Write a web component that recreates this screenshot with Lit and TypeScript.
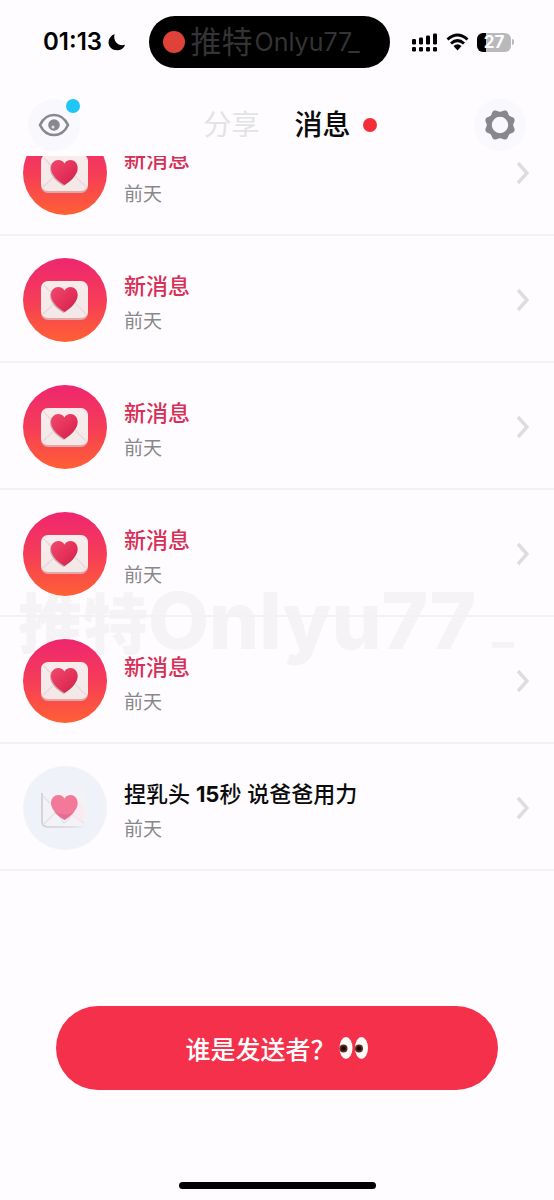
import { LitElement, html, css, svg } from "lit";
import { customElement, property, state } from "lit/decorators.js";
import { classMap } from "lit/directives/class-map.js";

const HEART =
  "M41.500 54C37 51 28 45 28 37C28 32 31.500 29 35.300 29C38.200 29 40.300 30.300 41.500 32.700C42.700 30.300 44.800 29 47.500 29C51.300 29 54.700 32 54.700 37C54.700 45 46 51 41.500 54Z";

/** Soft eight-lobed outline of the settings wheel, centred on 16,16. */
function gearPath(): string {
  const points: string[] = [];
  for (let i = 0; i < 160; i++) {
    const a = (i / 160) * Math.PI * 2;
    const r = 14.4 - 1.2 * Math.cos(a * 8);
    points.push(`${(16 + r * Math.cos(a)).toFixed(2)} ${(16 + r * Math.sin(a)).toFixed(2)}`);
  }
  return `M${points.join("L")}Z M24.2 16 A8.2 8.2 0 1 0 7.8 16 A8.2 8.2 0 1 0 24.2 16 Z`;
}

interface Message {
  title: string;
  when: string;
  read: boolean;
}

const MESSAGES: Message[] = [
  ...Array.from({ length: 5 }, () => ({ title: "新消息", when: "前天", read: false })),
  { title: "捏乳头 15秒 说爸爸用力", when: "前天", read: true },
];

@customElement("message-avatar")
class MessageAvatar extends LitElement {
  @property({ type: Boolean }) read = false;

  static styles = css`
    :host { display: block; flex: none; width: 84px; height: 84px; }
    .art { display: block; width: 100%; height: 100%; }
  `;

  render() {
    return html`<svg class="art" viewBox="0 0 84 84" aria-hidden="true">
      <defs>
        <linearGradient id="disc" x1="0" y1="0" x2="0" y2="1">
          <stop offset="0" stop-color="#ee2670" />
          <stop offset="0.5" stop-color="#f63c58" />
          <stop offset="1" stop-color="#ff6034" />
        </linearGradient>
        <linearGradient id="paper" x1="0" y1="0" x2="0" y2="1">
          <stop offset="0" stop-color="#f8ecec" />
          <stop offset="1" stop-color="#f3e7e7" />
        </linearGradient>
        <linearGradient id="heart" x1="0" y1="0" x2="1" y2="1">
          <stop offset="0" stop-color="#f2486c" />
          <stop offset="0.6" stop-color="#e22f57" />
          <stop offset="1" stop-color="#c4234b" />
        </linearGradient>
        <linearGradient id="fade" x1="0" y1="0" x2="1" y2="0">
          <stop offset="0" stop-color="#cfccd4" />
          <stop offset="0.7" stop-color="#dddbe2" />
          <stop offset="1" stop-color="#eef0f6" />
        </linearGradient>
      </defs>
      ${this.read
        ? svg`
          <circle cx="42" cy="42" r="42" fill="#eff2f8" />
          <rect x="18" y="25" width="46" height="36" rx="6" fill="#f3f2f6" />
          <path d="M19 27V55Q19 61 25 61H57Q61 61 63 58" fill="none" stroke="url(#fade)" stroke-width="1.600" />
          <path d="M20 30L36 46M21 58L33 46L41 57L50 49L61 57" fill="none" stroke="#e2e0e7" stroke-width="1.200" />
          <path d="M42 48L58 36L63 48L58 56Z" fill="#fbe8ee" opacity=".7" />
          <path d=${HEART} fill="#f3799a" />
          <path d="M31 46Q36 51 41.500 54Q47 51 51 46Q43 51 31 46Z" fill="#da6284" opacity=".5" />`
        : svg`
          <circle cx="42" cy="42" r="42" fill="url(#disc)" />
          <rect x="18" y="24" width="47" height="38" rx="7" fill="#e0a9a8" />
          <rect x="18" y="23" width="47" height="37" rx="7" fill="url(#paper)" />
          <path d="M21 27L36 43M20 56L33 44L42 54L51 44L63 56" fill="none" stroke="#e6d8da" stroke-width="1.200" />
          <path d=${HEART} transform="translate(-1 1)" fill="#cfa9b1" />
          <path d=${HEART} fill="url(#heart)" />`}
    </svg>`;
  }
}

@customElement("message-row")
class MessageRow extends LitElement {
  @property({ attribute: false }) message!: Message;

  static styles = css`
    :host { display: block; }
    .row {
      display: flex; align-items: center; gap: 17px; box-sizing: border-box;
      width: 100%; height: 127px; padding: 2px 25px 0 23px;
      border: 0; border-bottom: 2px solid #f3f1f4; background: none;
      font: inherit; text-align: left; cursor: pointer;
    }
    .text { flex: 1; display: flex; flex-direction: column; min-width: 0; padding-top: 8px; }
    .title { font-size: 22px; line-height: 35px; font-weight: 500; color: #d82f56; }
    .title.read { color: #0b0b0c; }
    .number { font-weight: 700; }
    .when { font-size: 19px; line-height: 35px; color: #88878b; }
    .chevron { flex: none; width: 13px; height: 24px; }
  `;

  render() {
    const m = this.message;
    const parts = m.title.split(/(\d+)/);
    return html`<button class="row" type="button">
      <message-avatar ?read=${m.read}></message-avatar>
      <span class="text">
        <span class=${classMap({ title: true, read: m.read })}>${parts.map((p) =>
          /^\d+$/.test(p) ? html`<span class="number">${p}</span>` : p)}</span>
        <span class="when">${m.when}</span>
      </span>
      <svg class="chevron" viewBox="0 0 13 24" aria-hidden="true">
        <path d="M2 2L11 12L2 22" fill="none" stroke="#dddcdf" stroke-width="3.400" />
      </svg>
    </button>`;
  }
}

@customElement("status-bar")
class StatusBar extends LitElement {
  static styles = css`
    :host {
      display: flex; align-items: center; justify-content: space-between;
      padding: 16px 40px 16px 43px; color: #000;
    }
    .clock { display: flex; align-items: center; gap: 6px; font-size: 24px; line-height: 28px; font-weight: 600; }
    .island {
      display: flex; align-items: center; box-sizing: border-box; width: 241px; height: 52px;
      padding-left: 14px; gap: 6px; border-radius: 26px; background: #000; color: #343335;
      font-size: 25px; line-height: 52px; white-space: nowrap;
    }
    .rec { flex: none; width: 22px; height: 22px; border-radius: 50%; background: #de4238; }
    .mark { display: flex; align-items: center; gap: 2px; }
    .cjk { font-size: 31px; }
    .icons { display: flex; align-items: center; gap: 8px; }
    .battery {
      display: flex; align-items: center; justify-content: center; width: 34px; height: 19px;
      border-radius: 6px; background: linear-gradient(90deg, #000 27%, #b9b8bb 27%);
      color: #fff; font-size: 17px; line-height: 19px; font-weight: 700;
    }
    .cell { display: flex; align-items: center; gap: 1px; }
    .tip { width: 2px; height: 6px; border-radius: 0 2px 2px 0; background: #b9b8bb; }
  `;

  render() {
    return html`
      <div class="clock">
        <span>01:13</span>
        <svg width="18" height="18" viewBox="0 0 18 18" aria-hidden="true">
          <path d="M6.500 1C2.700 2.700 .5 5.800 .5 9.300C.5 14 4.200 17.300 9 17.300C12.600 17.300 16 15.300 17 11.700C11.500 13.700 4.800 9.500 6.500 1Z" />
        </svg>
      </div>
      <div class="island">
        <span class="rec"></span>
        <span class="mark"><span class="cjk">推特</span><span>Onlyu77_</span></span>
      </div>
      <div class="icons">
        <svg width="26" height="19" viewBox="0 0 26 19" aria-hidden="true">
          <rect x="0" y="6" width="4" height="5.500" rx="1.200" />
          <rect x="7" y="4.500" width="4" height="7" rx="1.200" />
          <rect x="14" y="2.500" width="4" height="9" rx="1.200" />
          <rect x="21" y="0.500" width="4" height="11" rx="1.200" />
          <rect x="0" y="14" width="4" height="4.500" rx="1.200" />
          <rect x="7" y="14" width="4" height="4.500" rx="1.200" />
          <rect x="14" y="14" width="4" height="4.500" rx="1.200" />
          <rect x="21" y="14" width="4" height="4.500" rx="1.200" />
        </svg>
        <svg width="23" height="18" viewBox="0 0 23 18" aria-hidden="true">
          <path d="M1.500 6.500Q11.500 -2.500 21.500 6.500M5 10.500Q11.500 4.700 18 10.500" fill="none" stroke="#000" stroke-width="3" />
          <path d="M7.500 13Q11.500 9.500 15.500 13L11.500 17.500Z" />
        </svg>
        <div class="cell"><span class="battery">27</span><span class="tip"></span></div>
      </div>
    `;
  }
}

@customElement("app-root")
class AppRoot extends LitElement {
  @state() private tab = "消息";

  static styles = css`
    :host {
      position: relative; z-index: 0; display: flex; flex-direction: column; box-sizing: border-box;
      min-height: 100vh; overflow: hidden; background: #fefcfe;
      font-family: Inter, "Noto Sans CJK SC", sans-serif;
    }
    .header {
      display: flex; align-items: center; justify-content: space-between;
      box-sizing: border-box; height: 72px; padding: 10px 28px 0;
    }
    .round {
      position: relative; display: flex; align-items: center; justify-content: center;
      width: 52px; height: 52px; padding: 0; border: 0; border-radius: 50%;
      background: #f9f8fc; cursor: pointer;
    }
    .badge {
      position: absolute; top: 0; right: 0; width: 14px; height: 14px;
      border-radius: 50%; background: #1fc5f7;
    }
    .tabs { display: flex; align-items: center; gap: 35px; padding-left: 26px; }
    .tab {
      display: flex; align-items: center; gap: 12px; padding: 0; border: 0; background: none;
      font: inherit; font-size: 28px; line-height: 40px; color: #e3e2e4; cursor: pointer;
    }
    .tab.active { color: #0b0b0c; font-weight: 500; }
    .dot { width: 14px; height: 14px; border-radius: 50%; background: #f42e38; }
    .viewport { overflow: hidden; }
    .list { list-style: none; margin: -47px 0 0; padding: 0; }
    .footer {
      flex: 1; display: flex; flex-direction: column; align-items: center;
      justify-content: flex-end; padding: 0 56px 11px;
    }
    .cta {
      display: flex; align-items: center; justify-content: center; gap: 3px;
      width: 100%; height: 84px; margin-bottom: 92px; border: 0; border-radius: 42px;
      background: #f5304a; color: #fff; font: inherit; font-size: 25px; font-weight: 500; cursor: pointer;
    }
    .home { width: 197px; height: 7px; border-radius: 4px; background: #000; }
    .watermark {
      position: absolute; z-index: -1; top: 570px; left: 18px; display: flex; align-items: center;
      height: 100px; color: #f5f3f5; font-size: 79px; font-weight: 800;
      white-space: nowrap; pointer-events: none;
    }
    .watermark-cjk { font-size: 65px; font-weight: 900; }
    .watermark-end { padding: 10px 0 0 16px; font-size: 45px; }
  `;

  private renderTab(name: string, unread: boolean) {
    return html`<button
      class=${classMap({ tab: true, active: this.tab === name })}
      type="button"
      @click=${() => (this.tab = name)}
    >${name}${unread ? html`<span class="dot"></span>` : null}</button>`;
  }

  render() {
    return html`
      <status-bar></status-bar>
      <header class="header">
        <button class="round" type="button" aria-label="查看">
          <svg width="32" height="24" viewBox="0 0 32 24" aria-hidden="true">
            <path d="M2 12C5 5.500 10 2 16 2S27 5.500 30 12C27 18.500 22 22 16 22S5 18.500 2 12Z" fill="none" stroke="#89888e" stroke-width="2.600" />
            <circle cx="16" cy="12" r="5.800" fill="#89888e" />
            <circle cx="15" cy="14" r="1.500" fill="#e4e3e8" />
          </svg>
          <span class="badge"></span>
        </button>
        <nav class="tabs">${this.renderTab("分享", false)}${this.renderTab("消息", true)}</nav>
        <button class="round" type="button" aria-label="设置">
          <svg width="32" height="32" viewBox="0 0 32 32" aria-hidden="true">
            <path d=${gearPath()} fill="#88878e" fill-rule="evenodd" />
          </svg>
        </button>
      </header>
      <main class="viewport">
        <ul class="list">
          ${MESSAGES.map((m) => html`<li><message-row .message=${m}></message-row></li>`)}
        </ul>
      </main>
      <footer class="footer">
        <button class="cta" type="button">
          <span>谁是发送者？</span>
          <svg width="30" height="24" viewBox="0 0 30 24" aria-hidden="true">
            <ellipse cx="7" cy="12" rx="6.500" ry="11" fill="#fffaf8" />
            <ellipse cx="22.500" cy="12" rx="6.500" ry="11" fill="#fffaf8" />
            <circle cx="4.500" cy="12.500" r="4" fill="#5b2b20" />
            <circle cx="20" cy="12.500" r="4" fill="#5b2b20" />
            <circle cx="4.500" cy="12.500" r="2.300" fill="#160a08" />
            <circle cx="20" cy="12.500" r="2.300" fill="#160a08" />
          </svg>
        </button>
        <div class="home"></div>
      </footer>
      <div class="watermark" aria-hidden="true"><span class="watermark-cjk">推特</span><span>Onlyu77</span><span class="watermark-end">_</span></div>
    `;
  }
}
